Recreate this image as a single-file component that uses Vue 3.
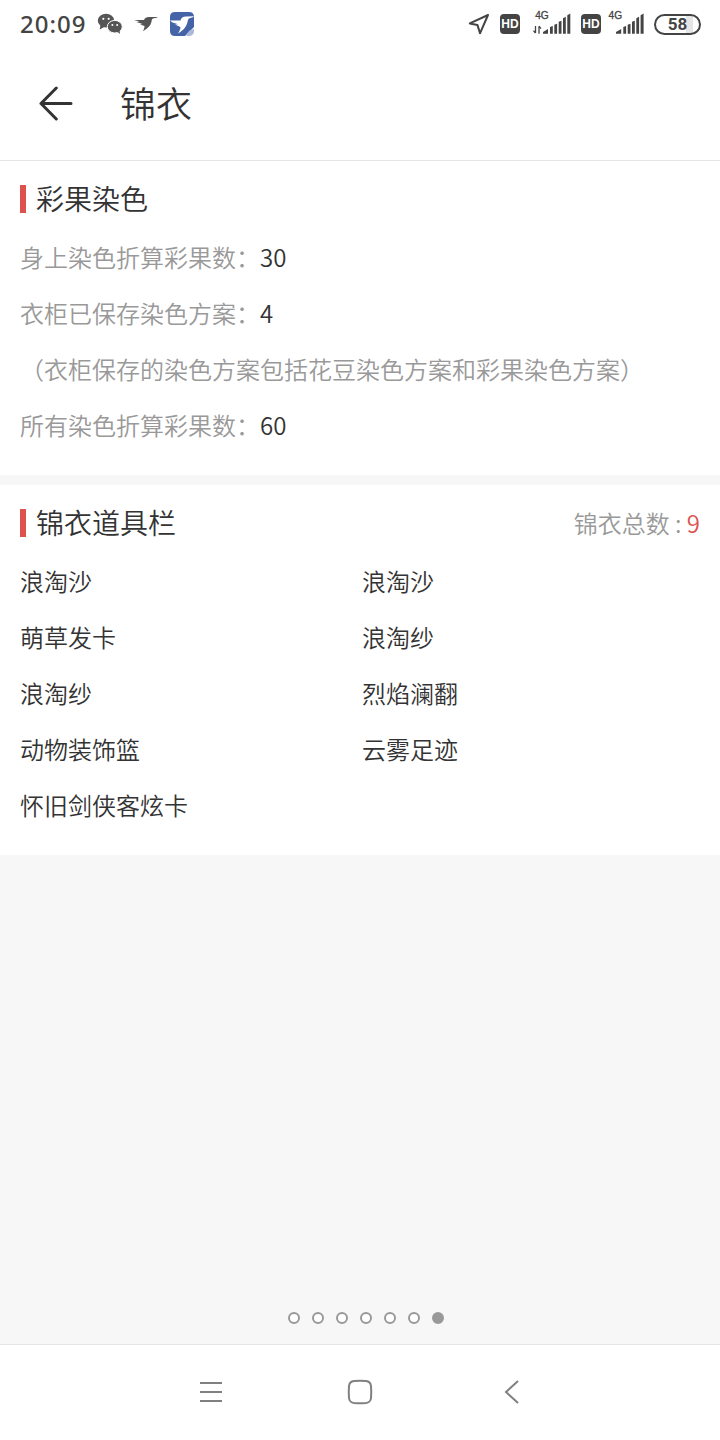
<script setup>
import { ref } from 'vue';

const dyeing = ref([
    { label: '身上染色折算彩果数：', value: '30' },
    { label: '衣柜已保存染色方案：', value: '4' },
    { label: '（衣柜保存的染色方案包括花豆染色方案和彩果染色方案）', value: '' },
    { label: '所有染色折算彩果数：', value: '60' }
]);

const items = ref([
    '浪淘沙', '浪淘沙',
    '萌草发卡', '浪淘纱',
    '浪淘纱', '烈焰澜翻',
    '动物装饰篮', '云雾足迹',
    '怀旧剑侠客炫卡'
]);

const pages = 7;
const activePage = 7;
</script>

<template>
    <div class="screen">
        <div class="status-bar">
            <span class="time">20:09</span>
            <svg class="wechat" width="26" height="22" viewBox="0 0 26 22">
                <ellipse cx="9" cy="7.700" rx="8.200" ry="6.900" fill="#555" />
                <path d="M3.500 12l-.8 4.500 4.500-2.500z" fill="#555" />
                <circle cx="6.300" cy="5.800" r="1.100" fill="#fff" />
                <circle cx="11.700" cy="5.800" r="1.100" fill="#fff" />
                <ellipse cx="17.800" cy="13.700" rx="7.500" ry="6.300" fill="#555" stroke="#fff" stroke-width="1" />
                <path d="M20 18.500l3 2.500-.5-4z" fill="#555" />
                <circle cx="15.400" cy="12" r="1" fill="#fff" />
                <circle cx="20.200" cy="12" r="1" fill="#fff" />
            </svg>
            <svg class="bird" width="24" height="16" viewBox="0 0 24 16">
                <path d="M0 4h10C10.500 2 12.500.9 15 .9l8.500.2v.5l-4.500.9c-1.200.4-1.300 1.600-1.500 3.200C16.700 9.500 14 12 9 15.200c1-2.200 1.500-3.700 1.500-5.200L6 8.400l2.500-.4L2.500 6l3-.5z" fill="#555" />
            </svg>
            <svg class="app" width="26" height="26" viewBox="0 0 26 26">
                <path d="M6 1h14q5 0 5 5v10l-9 9H6q-5 0-5-5V6q0-5 5-5z" fill="#4564a8" />
                <path d="M1 9.500h10.500C12 6.800 14 5.500 17 5.500l7.500-.3v.8l-4 1.200c-1.400.5-1.600 2-2 3.800-.9 4.200-3.500 8-9.500 11.500 2-3 2.500-4.800 2.400-6.500L6 13.500l3-.3-6-2z" fill="#fff" />
                <path d="M17.500 25q0-5 7.500-7v3q-1 4-5 4z" fill="#a9b9dd" />
            </svg>

            <div class="status-right">
                <svg class="locate" width="22" height="22" viewBox="0 0 22 22">
                    <path d="M20 2L1.800 10.400l7.700 1.700 2.500 8.200z" fill="none" stroke="#444" stroke-width="2" stroke-linejoin="round" />
                </svg>
                <span class="hd hd-one">HD</span>
                <svg class="signal-one" width="40" height="26" viewBox="0 0 40 26">
                    <text x="2.200" y="7.800" class="net">4G</text>
                    <path d="M2.500 15v7M.5 19.700l2 2.500M6 22.700v-7.500M8 17.700l-2-2.500" fill="none" stroke="#444" stroke-width="1.300" />
                    <path d="M10 22.700V21l5-3v4.700zM17 16l2.800-1v7.700H17zM21.300 13.700l2.800-1v10h-2.800zM25.700 10.700l2.800-1v13h-2.800zM30 7.200l2.800-1.500v17H30zM34.300 4.200l3-1.700v20.200h-3z" fill="#444" />
                </svg>
                <span class="hd hd-two">HD</span>
                <svg class="signal-two" width="36" height="26" viewBox="0 0 36 26">
                    <text x="-.4" y="7.800" class="net">4G</text>
                    <path d="M7 22.700V21l5.200-3v4.700zM14.300 16l2.800-1v7.700h-2.800zM18.700 13.700l2.800-1v10h-2.800zM23 10.700l2.800-1v13H23zM27.300 7.200l2.800-1.500v17h-2.800zM31.600 4.200l3-1.700v20.200h-3z" fill="#444" />
                </svg>
                <span class="battery">58</span>
            </div>
        </div>

        <header class="header">
            <svg width="34" height="36" viewBox="0 0 34 36">
                <path d="M17.300 2L2 17.500 17.300 33M2 17.500h30" fill="none" stroke="#333" stroke-width="3" stroke-linecap="round" stroke-linejoin="round" />
            </svg>
            <h1>锦衣</h1>
        </header>

        <section class="card">
            <div class="card-title">
                <h2>彩果染色</h2>
            </div>
            <p v-for="row in dyeing" :key="row.label" class="row">
                {{ row.label }}<span class="value">{{ row.value }}</span>
            </p>
        </section>

        <section class="card">
            <div class="card-title">
                <h2>锦衣道具栏</h2>
                <div class="total">锦衣总数 : <span>{{ items.length }}</span></div>
            </div>
            <div class="items">
                <div v-for="(item, i) in items" :key="i" class="item">{{ item }}</div>
            </div>
        </section>

        <div class="dots">
            <span v-for="n in pages" :key="n" class="dot" :class="{ active: n === activePage }"></span>
        </div>

        <nav class="nav-bar">
            <svg width="24" height="26" viewBox="0 0 24 26">
                <path d="M1 4h22M1 13h22M1 22h22" stroke="#808080" stroke-width="2" />
            </svg>
            <svg width="26" height="26" viewBox="0 0 26 26">
                <path d="M7 2q6-.5 12 0 4.500.5 5 5 .5 6 0 12-.5 4.500-5 5-6 .5-12 0-4.500-.5-5-5-.5-6 0-12 .5-4.500 5-5z" fill="none" stroke="#808080" stroke-width="2" />
            </svg>
            <svg width="24" height="26" viewBox="0 0 24 26">
                <path d="M21 2L9 13l12 11" fill="none" stroke="#808080" stroke-width="2" />
            </svg>
        </nav>
    </div>
</template>

<style>
body {
    margin: 0;
    background: #f7f7f7;
}
</style>

<style scoped>
.screen {
    display: flex;
    flex-direction: column;
    width: 720px;
    height: 1440px;
    background: #f7f7f7;
    color: #333;
    font-family: "Noto Sans CJK SC", sans-serif;
    font-weight: 350;
}

.status-bar {
    display: flex;
    align-items: center;
    flex: none;
    box-sizing: border-box;
    height: 48px;
    padding: 0 19px 0 20px;
    background: #fff;
}

.time {
    width: 77px;
    font-family: "Noto Sans", sans-serif;
    font-size: 24px;
    font-weight: 500;
    line-height: 48px;
    letter-spacing: 1px;
    color: #444;
}

.bird {
    margin-left: 11px;
}

.app {
    margin-left: 11px;
}

.status-right {
    display: flex;
    align-items: center;
    margin-left: auto;
}

.hd {
    width: 20px;
    height: 20px;
    border-radius: 4px;
    background: #444;
    color: #fff;
    font: bold 12px/20px "Liberation Sans", sans-serif;
    text-align: center;
}

.hd-one {
    margin-left: 10px;
}

.signal-one {
    margin: 0 8px 0 13px;
    overflow: visible;
}

.signal-two {
    margin: 0 9px 0 8px;
    overflow: visible;
}

.net {
    font: 10.2px "Liberation Sans", sans-serif;
    fill: #444;
    stroke: #444;
    stroke-width: 0.3px;
}

.battery {
    box-sizing: border-box;
    width: 47px;
    height: 21px;
    border: 2px solid #444;
    border-radius: 11px;
    background: linear-gradient(90deg, #fff 70%, #e5e5e5 70%, #e5e5e5 86%, #fff 86%);
    color: #444;
    font: bold 17px/17px Roboto, sans-serif;
    text-align: center;
}

.header {
    display: flex;
    align-items: center;
    flex: none;
    gap: 47px;
    height: 112px;
    padding-left: 39px;
    border-bottom: 1px solid #e5e5e5;
    background: #fff;
}

h1 {
    margin: 0;
    font-size: 36px;
    font-weight: 350;
    line-height: 108px;
    padding-bottom: 4px;
}

.card {
    padding: 7px 20px 21px;
    background: #fff;
}

.card + .card {
    margin-top: 10px;
}

.card-title {
    display: flex;
    align-items: center;
    justify-content: space-between;
    height: 62px;
}

h2 {
    height: 28px;
    margin: 0;
    padding-left: 10px;
    border-left: 6px solid #dd524d;
    font-size: 28px;
    font-weight: 350;
    line-height: 27px;
}

.total {
    padding-bottom: 1px;
    font-size: 24px;
    line-height: 35px;
    color: #999;
}

.total span {
    color: #dd524d;
}

.row {
    margin: 0;
    padding-bottom: 2px;
    font-size: 24px;
    line-height: 54px;
    white-space: nowrap;
    color: #999;
}

.value {
    color: #333;
}

.items {
    display: grid;
    grid-template-columns: 1fr 1fr;
    column-gap: 4px;
}

.item {
    padding-bottom: 2px;
    font-size: 24px;
    line-height: 54px;
}

.dots {
    display: flex;
    gap: 12px;
    margin: auto 0 20px 288px;
}

.dot {
    box-sizing: border-box;
    width: 12px;
    height: 12px;
    border: 2px solid #999;
    border-radius: 50%;
    background: #fff;
}

.dot.active {
    background: #999;
}

.nav-bar {
    display: flex;
    align-items: center;
    justify-content: space-between;
    flex: none;
    box-sizing: border-box;
    height: 96px;
    padding: 0 199px 1px;
    border-top: 1px solid #e5e5e5;
    background: #fff;
}
</style>
